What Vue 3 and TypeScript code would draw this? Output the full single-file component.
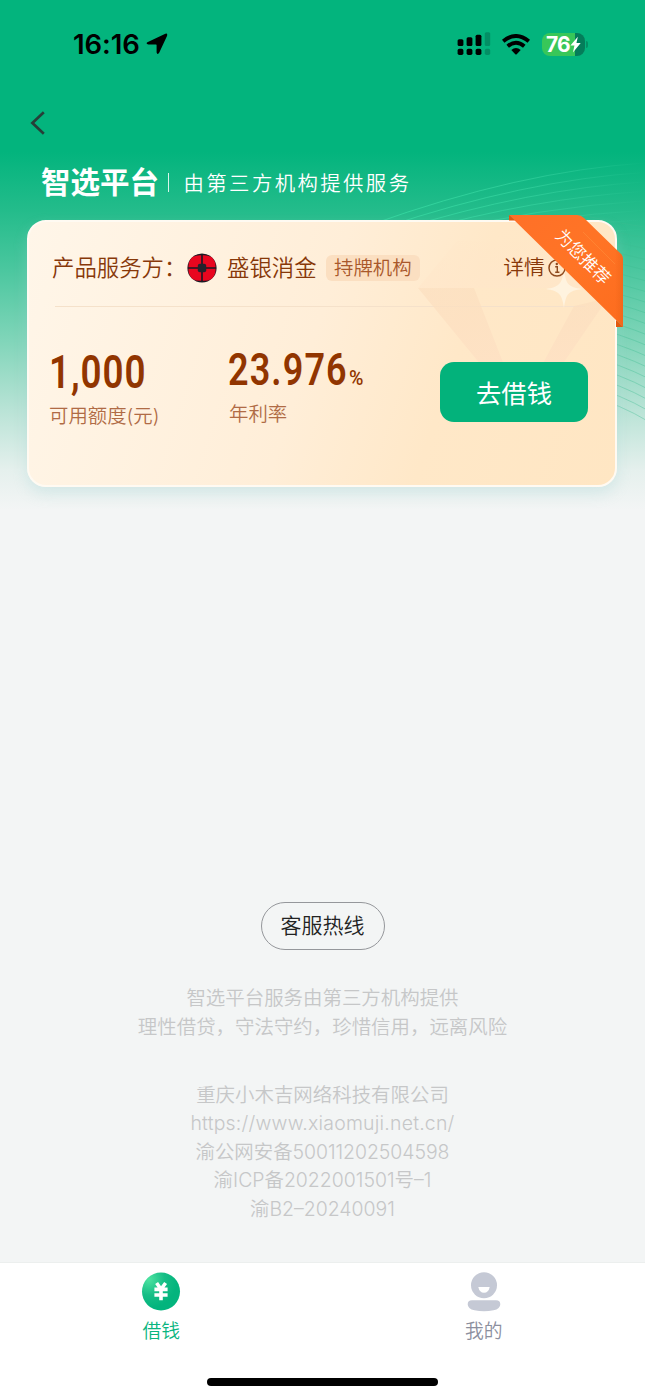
<script setup lang="ts">
interface FooterLine {
  text: string
  spacing: string
}

const notices: string[] = [
  '智选平台服务由第三方机构提供',
  '理性借贷，守法守约，珍惜信用，远离风险',
]

const company: FooterLine[] = [
  { text: '重庆小木吉网络科技有限公司', spacing: 'name-line' },
  { text: 'https://www.xiaomuji.net.cn/', spacing: 'url' },
  { text: '渝公网安备50011202504598', spacing: 'record' },
  { text: '渝ICP备2022001501号–1', spacing: 'icp' },
  { text: '渝B2–20240091', spacing: 'licence' },
]

// Contour lines fanning out behind the top right corner of the card
const arcs: string[] = Array.from({ length: 8 }, (_, i) => {
  const y = i * 9
  return `M${370 + i * 14} ${225 + i * 2.5} Q${520 + i * 5} ${171 + y} 645 ${163 + y * 1.05}`
})
const waves: string[] = Array.from({ length: 19 }, (_, i) => {
  const y = 226 + i * 10
  return `M590 ${y - 9} Q618 ${y - 3} 650 ${y + 2 + i * 0.8}`
})
</script>

<template>
  <div class="page">
    <svg class="contours" viewBox="0 0 645 500" width="645" height="500">
      <defs>
        <linearGradient id="arcFade" gradientUnits="userSpaceOnUse" x1="390" y1="0" x2="645" y2="0">
          <stop offset="0" stop-color="#37dba2" stop-opacity=".8" />
          <stop offset=".5" stop-color="#3ad9a4" stop-opacity=".6" />
          <stop offset="1" stop-color="#4bdcae" stop-opacity="0" />
        </linearGradient>
      </defs>
      <g fill="none" stroke="url(#arcFade)" stroke-width="1">
        <path v-for="(d, i) in arcs" :key="i" :d="d" />
      </g>
      <g fill="none" stroke="#3dbd92" stroke-width=".9" opacity=".42">
        <path v-for="(d, i) in waves" :key="i" :d="d" />
      </g>
    </svg>

    <header class="status">
      <div class="clock">
        <span class="time">16:16</span>
        <svg width="22" height="22" viewBox="0 0 22 22">
          <path d="M1.4 9.2 L18.8 .9 Q22 -.2 21 3 L13.2 19.8 Q11.6 22.2 10.6 19.4 V12 Q10.6 11.5 10 11.5 H2.4 Q-.6 10.6 1.4 9.2Z" />
        </svg>
      </div>
      <div class="indicators">
        <svg width="34" height="24" viewBox="0 0 34 24">
          <rect x="0.6" y="7.2" width="5.8" height="6.8" rx="1.5" />
          <rect x="9.6" y="5.2" width="5.8" height="8.8" rx="1.5" />
          <rect x="18.6" y="2.7" width="5.8" height="11.3" rx="1.5" />
          <rect x="0.6" y="16.8" width="5.8" height="6.2" rx="1.8" />
          <rect x="9.6" y="16.8" width="5.8" height="6.2" rx="1.8" />
          <rect x="18.6" y="16.8" width="5.8" height="6.2" rx="1.8" />
          <g fill="#038f65">
            <rect x="27.8" y="0.3" width="5.4" height="13.7" rx="1.5" />
            <rect x="27.8" y="16.8" width="5.4" height="6.2" rx="1.8" />
          </g>
        </svg>
        <svg class="wifi" width="28" height="21" viewBox="0 0 28 21">
          <g fill="none" stroke="#000" stroke-width="3.9">
            <path d="M1.2 7.2 Q14 -3.2 26.8 7.2" />
            <path d="M5.7 12.2 Q14 5.1 22.3 12.2" />
          </g>
          <path d="M9.3 16 Q14 12.1 18.7 16 L14.7 20.2 Q14 20.8 13.3 20.2Z" />
        </svg>
        <div class="battery">
          <span class="percent">76</span>
          <svg width="11" height="17" viewBox="0 0 10 16">
            <path d="M7.2 .6 L.2 8.9 H4 L2.6 15.6 L9.9 6.7 H5.9Z" fill="#fff" />
          </svg>
        </div>
        <i class="nub"></i>
      </div>
    </header>

    <nav class="back">
      <svg width="17" height="26" viewBox="0 0 17 26">
        <path d="M14.8 2.3 L3.4 13 L14.8 23.8" fill="none" stroke="#263f38" stroke-width="2.7" />
      </svg>
    </nav>

    <div class="heading">
      <h1>智选平台</h1>
      <i class="bar"></i>
      <p>由第三方机构提供服务</p>
    </div>

    <section class="card">
      <svg class="gem" width="240" height="145" viewBox="0 0 240 145">
        <defs>
          <linearGradient id="gemTop" x1="0" y1="0" x2="0" y2="1">
            <stop offset="0" stop-color="#ffe6c8" stop-opacity=".2" />
            <stop offset="1" stop-color="#ffe6ca" stop-opacity=".6" />
          </linearGradient>
          <linearGradient id="gemSide" x1="0" y1="0" x2="0" y2="1">
            <stop offset="0" stop-color="#fbdebe" stop-opacity=".65" />
            <stop offset="1" stop-color="#fee1c4" stop-opacity=".9" />
          </linearGradient>
        </defs>
        <path d="M49 19 H170 L209 66 H10Z" fill="url(#gemTop)" />
        <path d="M10 66 H66 L96 143 H73Z" fill="url(#gemSide)" />
        <path d="M166 84 L200 76 L154 143 H134Z" fill="url(#gemSide)" />
        <path d="M156 48 C158 62 160 65 174 67 C160 69 158 72 156 86 C154 72 151 69 138 67 C151 65 154 62 156 48Z" fill="#fff3df" />
      </svg>

      <div class="provider">
        <span class="label">产品服务方：</span>
        <svg class="brand" width="30" height="30" viewBox="0 0 30 30">
          <circle cx="15" cy="15" r="14.6" fill="#1b1823" />
          <path d="M5.5 4 Q9.5 1.9 14.2 2.2 V14.2 H1.4 Q1.2 8 5.5 4Z M24.5 4 Q20.5 1.9 15.8 2.2 V14.2 H28.6 Q28.8 8 24.5 4Z M5.5 26 Q9.5 28.1 14.2 27.8 V15.8 H1.4 Q1.2 22 5.5 26Z M24.5 26 Q20.5 28.1 15.8 27.8 V15.8 H28.6 Q28.8 22 24.5 26Z" fill="#e8061f" />
          <rect x="10.8" y="10.8" width="8.4" height="8.4" rx="2" fill="#24222c" />
        </svg>
        <span class="name">盛银消金</span>
        <span class="tag">持牌机构</span>
        <span class="detail">详情</span>
        <svg class="info" width="18" height="18" viewBox="0 0 18 18">
          <circle cx="9" cy="9" r="8" fill="none" stroke="#8f4a1d" stroke-width="1.5" />
          <circle cx="8.8" cy="5" r="1.2" fill="#8f4a1d" />
          <path d="M7.2 7.8 H9.3 V13.3 M7.2 13.3 H11.4" fill="none" stroke="#8f4a1d" stroke-width="1.4" />
        </svg>
      </div>
      <hr />
      <div class="figures">
        <div class="figure quota">
          <div class="value"><b>1,000</b></div>
          <span class="caption">可用额度(元)</span>
        </div>
        <div class="figure rate">
          <div class="value"><b>23.976</b><small>%</small></div>
          <span class="caption">年利率</span>
        </div>
        <button type="button">去借钱</button>
      </div>

      <div class="ribbon">
        <svg width="114" height="113" viewBox="0 0 114 113">
          <defs>
            <linearGradient id="ribbonFill" x1="0" y1="0" x2="1" y2="1">
              <stop offset="0" stop-color="#ff7028" />
              <stop offset=".5" stop-color="#ff7425" />
              <stop offset="1" stop-color="#fd6c1e" />
            </linearGradient>
            <linearGradient id="ribbonEdge" x1="0" y1="0" x2="1" y2="0">
              <stop offset="0" stop-color="#ee6519" stop-opacity="0" />
              <stop offset="1" stop-color="#ee6519" stop-opacity=".7" />
            </linearGradient>
          </defs>
          <path d="M0 0 H68 Q72 0 75 3 L112 39 Q114 41 114 44 V112 L107 105Z" fill="url(#ribbonFill)" />
          <path d="M106 33 L112 39 Q114 41 114 44 V112 L106 104Z" fill="url(#ribbonEdge)" />
          <path d="M0 0 L6 5.5 H0Z M107 105 L114 112 H107Z" fill="#e2590f" />
          <path d="M74 17 L106 49" fill="none" stroke="#ff9442" stroke-width=".8" opacity=".6" />
        </svg>
        <span>为您推荐</span>
      </div>
    </section>

    <footer class="about">
      <button type="button" class="hotline">客服热线</button>
      <div class="notices">
        <p v-for="line in notices" :key="line">{{ line }}</p>
      </div>
      <div class="company">
        <p v-for="line in company" :key="line.text" :class="line.spacing">{{ line.text }}</p>
      </div>
    </footer>

    <nav class="tabs">
      <a class="tab active">
        <svg width="40" height="40" viewBox="0 0 40 40">
          <defs>
            <radialGradient id="coin" cx=".18" cy=".18" r=".75">
              <stop offset="0" stop-color="#4de3a1" />
              <stop offset=".55" stop-color="#16be86" />
              <stop offset="1" stop-color="#03b47d" />
            </radialGradient>
          </defs>
          <circle cx="20" cy="19.5" r="19" fill="url(#coin)" />
          <path d="M15.6 11 L20 17.2 L24.6 11 M13.4 17.4 H26.6 M13.4 23 H26.6 M20 16 V28.2" fill="none" stroke="#fff" stroke-width="3.6" />
        </svg>
        <span>借钱</span>
      </a>
      <a class="tab">
        <svg width="40" height="40" viewBox="0 0 40 40">
          <circle cx="20" cy="13.2" r="13" fill="#c5c9d5" />
          <path d="M14.3 15 H25.7 Q24.5 20.8 20 20.8 Q15.5 20.8 14.3 15Z" fill="#fff" />
          <path d="M8 28.2 H32 Q36.3 28.2 36.3 32.3 Q36.3 37 29.5 38.3 Q20 40.3 10.5 38.3 Q3.7 37 3.7 32.3 Q3.7 28.2 8 28.2Z" fill="#c5c9d5" />
        </svg>
        <span>我的</span>
      </a>
      <i class="home"></i>
    </nav>
  </div>
</template>

<style>
body {
  margin: 0;
}
</style>

<style scoped>
.page {
  position: relative;
  display: flex;
  flex-direction: column;
  width: 645px;
  height: 1398px;
  overflow: hidden;
  color: #873809;
  font-family: Inter, "Noto Sans CJK SC", sans-serif;
  font-weight: 350;
  background: linear-gradient(180deg, #03b47d 0, #03b47d 152px, #24bc8b 211px, #4bc79f 270px, #80d5b9 340px, #b9e3d6 410px, #e5f0ed 470px, #f3f5f5 510px, #f3f5f5 100%);
}
.contours {
  position: absolute;
  top: 0;
  left: 0;
}
.status {
  display: flex;
  justify-content: space-between;
  align-items: center;
  height: 88px;
  padding: 0 57px 0 73px;
}
.clock,
.indicators {
  display: flex;
  align-items: center;
}
.clock {
  gap: 6px;
  color: #000;
}
.time {
  font-size: 27.5px;
  font-weight: 600;
  letter-spacing: -0.1px;
}
.wifi {
  margin: 0 12px 0 11px;
}
.battery {
  display: flex;
  align-items: center;
  justify-content: center;
  width: 43px;
  height: 23px;
  border-radius: 8px;
  color: #fff;
  background: linear-gradient(90deg, #38c759 0, #38c759 76%, #047d5a 76%);
}
.percent {
  font-size: 21px;
  font-weight: 700;
  letter-spacing: -0.8px;
}
.nub {
  width: 2px;
  height: 7px;
  margin-left: 1px;
  border-radius: 0 3px 3px 0;
  background: #038f65;
}
.back {
  height: 77px;
  padding: 22px 0 0 29px;
  box-sizing: border-box;
}
.heading {
  display: flex;
  align-items: center;
  height: 34px;
  padding-left: 41px;
  color: #fff;
}
.heading h1 {
  margin: 0;
  font-size: 29.5px;
  font-weight: 700;
  line-height: 34px;
}
.bar {
  width: 1px;
  height: 19px;
  margin: 0 14.5px 0 9px;
  background: #d9f5eb;
}
.heading p {
  margin: -1px 0 0;
  font-size: 20.4px;
  letter-spacing: 2.4px;
}
.card {
  position: relative;
  box-sizing: border-box;
  width: 590px;
  height: 267px;
  margin: 21px 0 0 27px;
  border: 2px solid #fffaf2;
  border-radius: 19px;
  background: linear-gradient(108deg, #fff6e9 0%, #ffeed8 48%, #ffe8c8 70%, #ffe6c3 100%);
  box-shadow: 0 7px 14px rgba(160, 208, 210, 0.3);
}
.gem {
  position: absolute;
  top: 0;
  left: 379px;
}
.provider {
  position: relative;
  display: flex;
  align-items: center;
  height: 84px;
  padding: 8px 0 0 23px;
  box-sizing: border-box;
  font-size: 22.4px;
}
.label,
.name,
.detail {
  line-height: 30px;
}
.label {
  width: 135px;
  white-space: nowrap;
}
.brand {
  margin-right: 10px;
}
.tag {
  margin-left: 9px;
  padding: 0 8.5px;
  border-radius: 6px;
  background: #fbdfc1;
  color: #a9582b;
  font-size: 19.4px;
  line-height: 26px;
}
.detail {
  margin-left: 83px;
  font-size: 20.8px;
}
.info {
  margin-left: 3px;
}
hr {
  height: 1px;
  margin: 0 30px 0 26px;
  border: 0;
  background: #f5e1ca;
}
.figures {
  position: relative;
  display: flex;
  padding: 41px 26px 0 20px;
}
.figure {
  display: flex;
  flex-direction: column;
}
.quota {
  width: 179px;
  padding-top: 2px;
}
.rate {
  width: 212px;
}
.value {
  display: flex;
  align-items: baseline;
  height: 45px;
  color: #913500;
  font-family: Roboto, sans-serif;
  line-height: 45px;
}
.value b {
  width: 121px;
  font-size: 45px;
  font-weight: 600;
  letter-spacing: 1.4px;
  transform: scaleX(0.8);
  transform-origin: left;
}
.value small {
  font-size: 20px;
  font-weight: 500;
  transform: scaleX(0.98);
  transform-origin: left;
}
.quota b {
  font-size: 46px;
  letter-spacing: 1.2px;
}
.rate .value {
  margin-top: -1px;
  margin-bottom: 1px;
}
.caption {
  color: #b06b45;
  font-size: 19.4px;
  line-height: 42px;
}
.rate .caption {
  padding-left: 1px;
}
button {
  padding: 0;
  font-family: inherit;
}
.figures button {
  width: 148px;
  height: 60px;
  margin-top: 14px;
  border: 0;
  border-radius: 14px;
  background: #03b27b;
  color: #fff;
  font-size: 25.3px;
  font-weight: 400;
}
.ribbon {
  position: absolute;
  top: -7px;
  left: 480px;
  width: 114px;
  height: 113px;
}
.ribbon span {
  position: absolute;
  top: 31px;
  left: 33.5px;
  width: 80px;
  color: #fff;
  font-size: 17.3px;
  line-height: 22px;
  text-align: center;
  transform: rotate(45deg);
}
.about {
  display: flex;
  flex: 1;
  flex-direction: column;
  align-items: center;
  padding-top: 415px;
  color: #c6c7c8;
  font-size: 19.45px;
  line-height: 28.5px;
  text-align: center;
}
.about p {
  margin: 0;
}
.hotline {
  width: 124px;
  height: 48px;
  padding-bottom: 4px;
  border: 1.5px solid #95979b;
  border-radius: 24px;
  background: transparent;
  color: #222;
  font-size: 21px;
  font-weight: 350;
}
.notices {
  margin-top: 34px;
}
.company {
  margin-top: 39.5px;
}
.url {
  letter-spacing: 0.22px;
}
.company .record {
  letter-spacing: -0.05px;
}
.tabs {
  position: relative;
  display: grid;
  grid-template-columns: 1fr 1fr;
  box-sizing: border-box;
  height: 136px;
  padding-top: 9px;
  border-top: 1px solid #ecefee;
  background: #fff;
}
.tab {
  display: flex;
  flex-direction: column;
  align-items: center;
  color: #8c8f9e;
  font-size: 18.8px;
  line-height: 28px;
}
.tab span {
  margin-top: 6px;
}
.active {
  color: #09b580;
}
.home {
  position: absolute;
  bottom: 12px;
  left: 207px;
  width: 231px;
  height: 8px;
  border-radius: 4px;
  background: #000;
}
</style>
